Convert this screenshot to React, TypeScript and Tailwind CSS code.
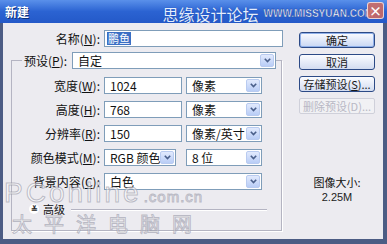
import React from "react";

const cjk = "font-['Noto_Sans_CJK_SC','Noto_Sans',sans-serif]";

function Chevron() {
  return (
    <span className="flex w-[14px] shrink-0 items-center justify-center rounded-[2px] border border-[#b9cbf0] bg-gradient-to-b from-[#e2eafd] to-[#b9cdf6]">
      <svg width="7" height="5" viewBox="0 0 7 5">
        <path d="M0.8 0.8 L3.5 3.6 L6.2 0.8" stroke="#4a5f8a" strokeWidth="1.6" fill="none" />
      </svg>
    </span>
  );
}

function Select({ w, text }: { w: string; text: string }) {
  return (
    <div className={`flex h-[17px] border border-[#7f9db9] bg-white p-[1px] ${w}`}>
      <span className="flex flex-1 items-center whitespace-nowrap pl-[4px] text-[12px] leading-none text-[#111]">{text}</span>
      <Chevron />
    </div>
  );
}

function Input({ w, text }: { w: string; text: string }) {
  return (
    <div className={`flex h-[17px] items-center border border-[#7f9db9] bg-white pl-[5px] text-[12px] leading-none text-[#111] ${w}`}>
      {text}
    </div>
  );
}

function Label({ w, name, k }: { w: string; name: string; k: string }) {
  return (
    <div className={`shrink-0 whitespace-nowrap text-right text-[12px] leading-[17px] text-[#111] ${w}`}>
      {name}(<span className="underline">{k}</span>):
    </div>
  );
}

function Btn({ text, strong, disabled }: { text: React.ReactNode; strong?: boolean; disabled?: boolean }) {
  return (
    <div
      className={
        disabled
          ? "flex h-[16px] w-[76px] items-center justify-center whitespace-nowrap rounded-[2px] border border-[#cfd0da] bg-[#f1f1f4] text-[11px] leading-none text-[#b8b8c4]"
          : strong
          ? "flex h-[16px] w-[76px] items-center justify-center whitespace-nowrap rounded-[3px] border border-[#2c4a86] bg-gradient-to-b from-[#fbfcff] to-[#c9d7f3] text-[11px] leading-none text-[#1a1a1a] shadow-[inset_0_0_0_1px_#8fb0ea]"
          : "flex h-[16px] w-[76px] items-center justify-center whitespace-nowrap rounded-[3px] border border-[#2c4a86] bg-gradient-to-b from-[#fbfcff] to-[#d3dcf0] text-[11px] leading-none text-[#1a1a1a]"
      }
    >
      {text}
    </div>
  );
}

export default function App() {
  return (
    <div className={`relative h-[244px] w-[387px] overflow-hidden bg-[#4c5c84] ${cjk}`}>
      {/* title bar */}
      <div className="flex h-[23px] items-center bg-gradient-to-b from-[#5a90ea] via-[#2b63d2] to-[#2459c8] pl-[5px]">
        <span className="text-[12px] font-bold text-white [text-shadow:1px_1px_0_#0b2f7a]">新建</span>
        <span className="ml-auto mt-[4px] text-[16px] leading-none text-[#e4eeff] [text-shadow:0_0_1px_#0a3a9a]">
          思缘设计论坛
        </span>
        <span className="ml-[5px] mt-[5px] font-['Liberation_Sans',sans-serif] text-[10px] font-bold leading-none text-white [-webkit-text-stroke:0.5px_#2a4fa8]">
          WWW.MISSYUAN.COM
        </span>
        <span className="ml-[-6px] mr-[3px] mb-[3px] flex h-[17px] w-[17px] items-center justify-center rounded-[3px] border border-white/70 bg-[#e06a55]/80 text-[13px] font-bold leading-none text-white">
          ×
        </span>
      </div>

      {/* body */}
      <div className="mx-[3px] mr-[4px] flex h-[216px] bg-[#ecebf0]">
        {/* left column */}
        <div className="flex w-[280px] flex-col">
          <div className="mt-[7px] flex items-center">
            <Label w="w-[97px]" name="名称" k="N" />
            <div className="ml-[4px] flex h-[17px] w-[179px] items-center border border-[#7f9db9] bg-white pl-[2px]">
              <span className="bg-[#3a6fc4] px-[1px] text-[11px] leading-[13px] text-white">鹏鱼</span>
            </div>
          </div>

          <div className="ml-[8px] mt-[13px] flex h-[171px] w-[271px] flex-col border border-[#b4b4c2] shadow-[1px_1px_0_#ffffff]">
            <div className="mt-[-9px] flex items-center">
              <div className="ml-[10px] whitespace-nowrap bg-[#ecebf0] pl-[2px] pr-[5px] text-[12px] leading-[17px] text-[#111]">
                预设(<span className="underline">P</span>):
              </div>
              <Select w="w-[204px]" text="自定" />
            </div>

            <div className="mt-[8px] flex items-center">
              <Label w="w-[88px]" name="宽度" k="W" />
              <Input w="ml-[4px] w-[78px]" text="1024" />
              <Select w="ml-[4px] w-[76px]" text="像素" />
            </div>
            <div className="mt-[7px] flex items-center">
              <Label w="w-[88px]" name="高度" k="H" />
              <Input w="ml-[4px] w-[78px]" text="768" />
              <Select w="ml-[4px] w-[76px]" text="像素" />
            </div>
            <div className="mt-[7px] flex items-center">
              <Label w="w-[88px]" name="分辨率" k="R" />
              <Input w="ml-[4px] w-[78px]" text="150" />
              <Select w="ml-[4px] w-[76px]" text="像素/英寸" />
            </div>
            <div className="mt-[7px] flex items-center">
              <Label w="w-[88px]" name="颜色模式" k="M" />
              <Select w="ml-[4px] w-[72px]" text="RGB 颜色" />
              <Select w="ml-[10px] w-[76px]" text="8 位" />
            </div>
            <div className="mt-[7px] flex items-center">
              <Label w="w-[88px]" name="背景内容" k="C" />
              <Select w="ml-[4px] w-[158px]" text="白色" />
            </div>

            <div className="mt-[13px] flex h-[12px] items-center">
              <span className="ml-[17px] flex h-[10px] w-[10px] items-center justify-center rounded-full bg-white text-[8px] font-bold leading-none text-[#222]">
                ≚
              </span>
              <span className="ml-[4px] text-[11px] leading-none text-[#111]">高级</span>
              <div className="ml-[6px] h-[1px] w-[196px] bg-[#b4b4c2] shadow-[0_1px_0_#ffffff]" />
            </div>
          </div>
        </div>

        {/* right column */}
        <div className="flex flex-1 flex-col pl-[16px]">
          <div className="mt-[9px] flex flex-col gap-[6px]">
            <Btn strong text="确定" />
            <Btn text="取消" />
            <Btn text={<>存储预设(<span className="underline">S</span>)...</>} />
            <Btn disabled text="删除预设(D)..." />
          </div>
          <div className="mt-[61px] w-[76px] text-center text-[11px] leading-[14px] text-[#111]">图像大小:</div>
          <div className="mt-[1px] w-[76px] text-center font-['Liberation_Sans',sans-serif] text-[11px] leading-[14px] text-[#222]">
            2.25M
          </div>
        </div>
      </div>

      {/* watermark overlay */}
      <div className="pointer-events-none absolute left-[4px] top-[179px] flex items-baseline font-['Liberation_Sans',sans-serif] leading-none text-white/50 [-webkit-text-stroke:1px_rgba(150,150,166,0.6)]">
        <span className="text-[28px] tracking-[3px]">PConline</span>
        <span className="ml-[2px] text-[15px] tracking-[1px]">.com.cn</span>
      </div>
      <div className="pointer-events-none absolute left-[12px] top-[214px] text-[20px] leading-none tracking-[12px] text-white/50 [-webkit-text-stroke:1px_rgba(150,150,166,0.6)]">
        太平洋电脑网
      </div>
    </div>
  );
}
